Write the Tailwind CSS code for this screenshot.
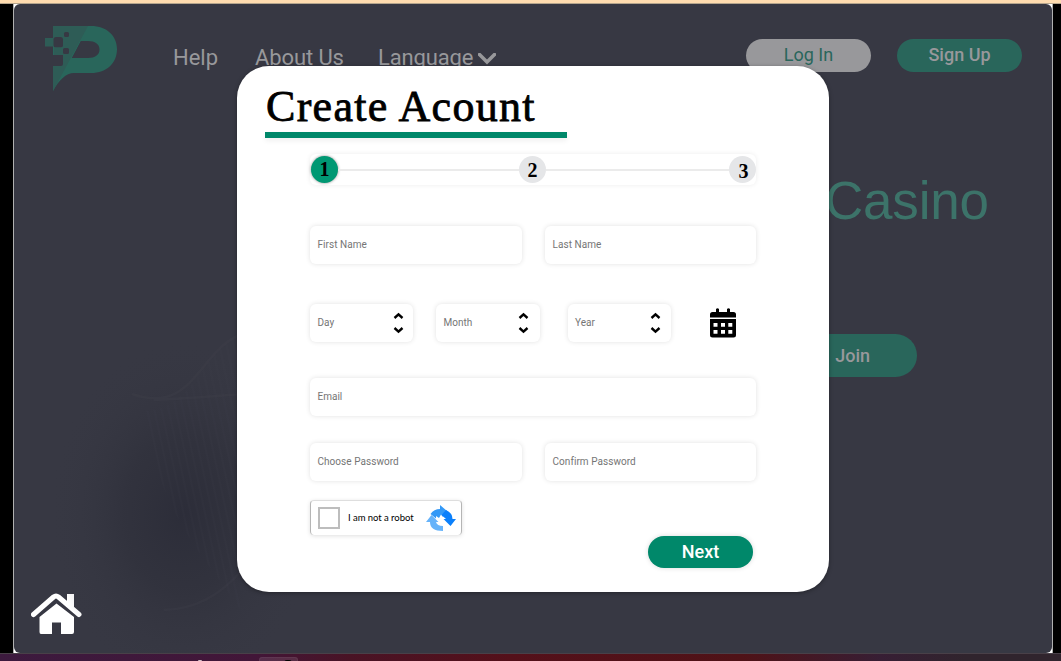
<!DOCTYPE html>
<html lang="en">
<head>
<meta charset="utf-8">
<title>Create Account</title>
<script src="https://cdn.jsdelivr.net/npm/@tailwindcss/browser@4"></script>
</head>
<body class="h-[661px] w-[1061px] overflow-hidden bg-black font-['Roboto',sans-serif]">
<div class="flex h-[661px] flex-col">
  <div class="h-[4px] shrink-0 border-b border-[#b5a58d] bg-[#ffdcb0]"></div>
  <div class="mx-[13px] h-[649px] w-[1040px] shrink-0 border-x border-[#b0b0b0] bg-white">
    <main class="relative flex h-full flex-col overflow-hidden rounded-[6px] bg-[#373843]">
      <svg class="absolute left-0 top-[260px]" width="500" height="389" viewBox="0 0 500 389" fill="none">
        <defs>
          <radialGradient id="glow"><stop offset="0" stop-color="#2a2b37" stop-opacity=".85"/><stop offset=".45" stop-color="#2d2e39" stop-opacity=".55"/><stop offset="1" stop-color="#373843" stop-opacity="0"/></radialGradient>
          <pattern id="mesh" width="7" height="40" patternUnits="userSpaceOnUse" patternTransform="rotate(-12)"><path d="M2 0v40" stroke="#454752" stroke-opacity=".28"/></pattern>
        </defs>
        <ellipse cx="170" cy="250" rx="135" ry="175" fill="url(#glow)"/>
        <path d="M128 147C180 148 188 87 226 70V345C190 290 150 260 128 147Z" fill="url(#mesh)" opacity=".55"/>
        <path d="M118 130C180 152 185 85 228 70M140 136Q180 134 228 130M150 346Q195 345 228 306" stroke="#44464f" stroke-opacity=".2" stroke-width="2.500"/>
      </svg>

      <header class="relative flex h-[106px] items-start">
        <svg class="ml-[31px] mt-[22px]" width="73" height="66" viewBox="0 0 73 66">
          <path fill="#29665b" d="M8 0H46C62 0 72 10 72 23C72 37 62 47 46 47H29C21 47 14 54 8 65ZM36 15L27 32H43C50 32 54.500 29 54.500 23.500C54.500 18 50 15 43 15Z" fill-rule="evenodd"/>
          <path fill="#2e5c56" d="M8 0H43L8 65V40H17V29H9V20.500H0V12H8Z"/>
          <g fill="#373843"><path d="M36 15L27 32H43V15Z"/><rect x="8.500" y="11" width="9.500" height="10.500" rx="2.500"/><rect x="19" y="6" width="5" height="5" rx="1.500"/><rect x="18" y="22" width="6" height="6" rx="1.500"/><path d="M8 29H18V38Q18 40 16 40H8Z"/></g>
          <rect x="9" y="21.500" width="9" height="7.500" fill="#2e5c56"/>
        </svg>
        <nav class="mt-[39px] flex items-start whitespace-nowrap text-[22px] leading-[29px] text-[#98989b]">
          <a class="ml-[55px] w-[82px]">Help</a>
          <a class="w-[123px] tracking-[-0.1px]">About Us</a>
          <a class="flex w-[368px] items-start gap-[5px] tracking-[-0.15px]">Language
            <svg class="mt-[10px]" width="18" height="12" viewBox="0 0 18 12" fill="none" stroke="#98989b" stroke-width="3.500"><path d="M1.500 1.500L9 9L16.500 1.500" stroke-linecap="round"/></svg>
          </a>
        </nav>
        <div class="mt-[35px] flex gap-[26px] text-[18px]">
          <button class="h-[33px] w-[125px] rounded-full bg-[#98989b] pb-[2px] text-[#29665b]">Log In</button>
          <button class="h-[33px] w-[125px] rounded-full bg-[#29665b] pb-[2px] font-medium text-[#98989b]">Sign Up</button>
        </div>
      </header>

      <section class="flex flex-col items-start pl-[811px]">
        <h1 class="mt-[60px] font-['Liberation_Sans',sans-serif] text-[53px] leading-[62px] tracking-[-0.2px] text-[#3c7369]">Casino</h1>
        <button class="mt-[102px] h-[43px] w-[92px] rounded-r-full bg-[#29665b] pr-[47px] text-right text-[18px] font-medium text-[#98989b]">Join</button>
      </section>

      <svg class="mb-[19px] ml-[17px] mt-auto" width="52" height="41" viewBox="0 0 52 41" fill="#fff">
        <path d="M36 1H43V16L36 10Z"/>
        <path d="M2.500 21.500L22.500 4Q25 2 27.500 4L48 21.500" fill="none" stroke="#fff" stroke-width="5" stroke-linecap="round"/>
        <path d="M8.500 24L25.500 10.500L43 24V39Q43 41 41 41H30V29.500H21V41H10Q8.500 41 8.500 39Z"/>
      </svg>

      <div role="dialog" class="absolute left-[223px] top-[62px] h-[526px] w-[592px] rounded-[32px] bg-white text-[10px] text-[#757575] shadow-[0_1px_4px_rgba(0,0,0,0.35)]">
        <div class="ml-[28px] w-[302px] pt-[17px]">
          <h2 class="h-[49px] whitespace-nowrap pl-px font-['Liberation_Serif',serif] text-[44px] leading-[47px] tracking-[1.300px] text-black [-webkit-text-stroke:0.800px_#000]">Create Acount</h2>
          <div class="h-[6px] bg-[#00886a] shadow-[0_3px_5px_rgba(0,0,0,0.06)]"></div>
        </div>

        <form class="ml-[73px] flex w-[446px] flex-col">
          <ol class="mt-[16px] flex h-[31px] items-center rounded-[6px] pl-px font-['Liberation_Serif',serif] text-[20px] font-bold text-black shadow-[0_0_5px_rgba(0,0,0,0.08)]">
            <li class="flex size-[27px] items-center justify-center rounded-full bg-[#009873] pb-[2px] shadow-[0_0_3px_rgba(0,0,0,0.45)]">1</li>
            <li class="h-[2px] w-[181px] bg-[#ebebeb]"></li>
            <li class="flex size-[27px] items-center justify-center rounded-full bg-[#e5e6e8]">2</li>
            <li class="h-[2px] flex-1 bg-[#ebebeb]"></li>
            <li class="flex size-[27px] items-center justify-center rounded-full bg-[#e5e6e8] pl-[2px] pt-[2px]">3</li>
          </ol>
          <div class="mt-[41px] flex h-[38px] justify-between tracking-[0.05px]">
            <label class="flex w-[212px] items-center rounded-[6px] pb-[2px] pl-[7.500px] shadow-[0_0_5px_rgba(0,0,0,0.12)]">First Name</label>
            <label class="flex w-[211px] items-center rounded-[6px] pb-[2px] pl-[7.500px] shadow-[0_0_5px_rgba(0,0,0,0.12)]">Last Name</label>
          </div>
          <div class="mt-[40px] flex h-[38px] items-center">
            <label class="flex h-full w-[103px] items-center justify-between rounded-[6px] pl-[7.500px] pr-[9px] shadow-[0_0_5px_rgba(0,0,0,0.12)]"><span class="pb-[2px]">Day</span>
              <svg width="11" height="22" viewBox="0 0 11 22" fill="none" stroke="#000" stroke-width="2.400"><path d="M1.500 6L5.500 2.400L9.500 6M1.500 16L5.500 19.600L9.500 16"/></svg></label>
            <label class="ml-[23px] flex h-full w-[104px] items-center justify-between rounded-[6px] pl-[7.500px] pr-[11px] shadow-[0_0_5px_rgba(0,0,0,0.12)]"><span class="pb-[2px]">Month</span>
              <svg width="11" height="22" viewBox="0 0 11 22" fill="none" stroke="#000" stroke-width="2.400"><path d="M1.500 6L5.500 2.400L9.500 6M1.500 16L5.500 19.600L9.500 16"/></svg></label>
            <label class="ml-[28px] flex h-full w-[103px] items-center justify-between rounded-[6px] pl-[7px] pr-[10px] shadow-[0_0_5px_rgba(0,0,0,0.12)]"><span class="pb-[2px]">Year</span>
              <svg width="11" height="22" viewBox="0 0 11 22" fill="none" stroke="#000" stroke-width="2.400"><path d="M1.500 6L5.500 2.400L9.500 6M1.500 16L5.500 19.600L9.500 16"/></svg></label>
            <svg class="ml-[39px]" width="26" height="30" viewBox="0 0 26 30"><path d="M6 1Q7.500-.5 9 1V4H17V1Q18.500-.5 20 1V4H23.500Q26 4 26 6.500V9.500H0V6.500Q0 4 2.500 4H6ZM0 11H26V27Q26 29.500 23.500 29.500H2.500Q0 29.500 0 27Z"/><path fill="#fff" d="M3.500 15h4v3.700h-4zM11 15h4v3.700h-4zM18.300 15h4v3.700h-4zM3.500 22h4v3.700h-4zM11 22h4v3.700h-4zM18.300 22h4v3.700h-4z"/></svg>
          </div>
          <label class="mt-[36px] flex h-[38px] items-center rounded-[6px] pb-[2px] pl-[7.500px] shadow-[0_0_5px_rgba(0,0,0,0.12)]">Email</label>
          <div class="mt-[27px] flex h-[38px] justify-between tracking-[0.05px]">
            <label class="flex w-[212px] items-center rounded-[6px] pb-[2px] pl-[7.500px] shadow-[0_0_5px_rgba(0,0,0,0.12)]">Choose Password</label>
            <label class="flex w-[211px] items-center rounded-[6px] pb-[2px] pl-[7.500px] shadow-[0_0_5px_rgba(0,0,0,0.12)]">Confirm Password</label>
          </div>
          <div class="flex items-start justify-between pr-[3px]">
            <label class="mt-[19px] flex h-[35px] w-[152px] items-center rounded-[4px] border-x border-t border-x-[#b5b5b5] border-t-[#dedede] pl-[7px] font-['Lato',sans-serif] text-[9.500px] text-black shadow-[0_1px_4px_rgba(0,0,0,0.13)]">
              <span class="size-[22px] border-2 border-[#bdbdbd]"></span>
              <span class="ml-[8px] w-[78px] whitespace-nowrap tracking-[-0.05px]">I am not a robot</span>
              <svg width="30" height="27" viewBox="0 0 30 27"><path fill="#3399f7" d="M4.500 9Q8 4 14 4V0L21 6L17 12L15 9.500L13 13L10 11V13.500Z"/><path fill="#0b80fb" d="M20 5Q26.500 8 26.500 14H30L24.500 21L17.500 14H20L15.500 10Z"/><path fill="#66b3fa" d="M0 17L5.500 10L12.500 17H10Q11 21 17 21V26Q4 26 4 17Z"/></svg>
            </label>
            <button class="mt-[55px] h-[32px] w-[105px] rounded-full bg-[#00886a] pb-[2px] text-[18px] font-medium text-white shadow-[0_0_5px_rgba(0,0,0,0.15)]">Next</button>
          </div>
        </form>
      </div>
    </main>
  </div>
  <footer class="flex h-[8px] items-start overflow-hidden border-t border-[#494048] bg-[linear-gradient(90deg,#3c1a3e_0%,#421638_24%,#491325_33%,#54101a_48%,#4f1217_70%,#371e34_83%,#30242d_91%,#30242d_100%)]">
    <span class="ml-[198px] mt-[6px] h-[2px] w-[4px] rounded-full bg-[#d5c3cb]"></span>
    <span class="ml-[57px] mt-[3px] flex h-[8px] w-[39px] justify-end rounded-[3px] border border-white/5 bg-white/10 pr-[5px] pt-[2px]"><span class="h-[3px] w-[8px] rounded-t-full bg-black"></span></span>
  </footer>
</div>
</body>
</html>
